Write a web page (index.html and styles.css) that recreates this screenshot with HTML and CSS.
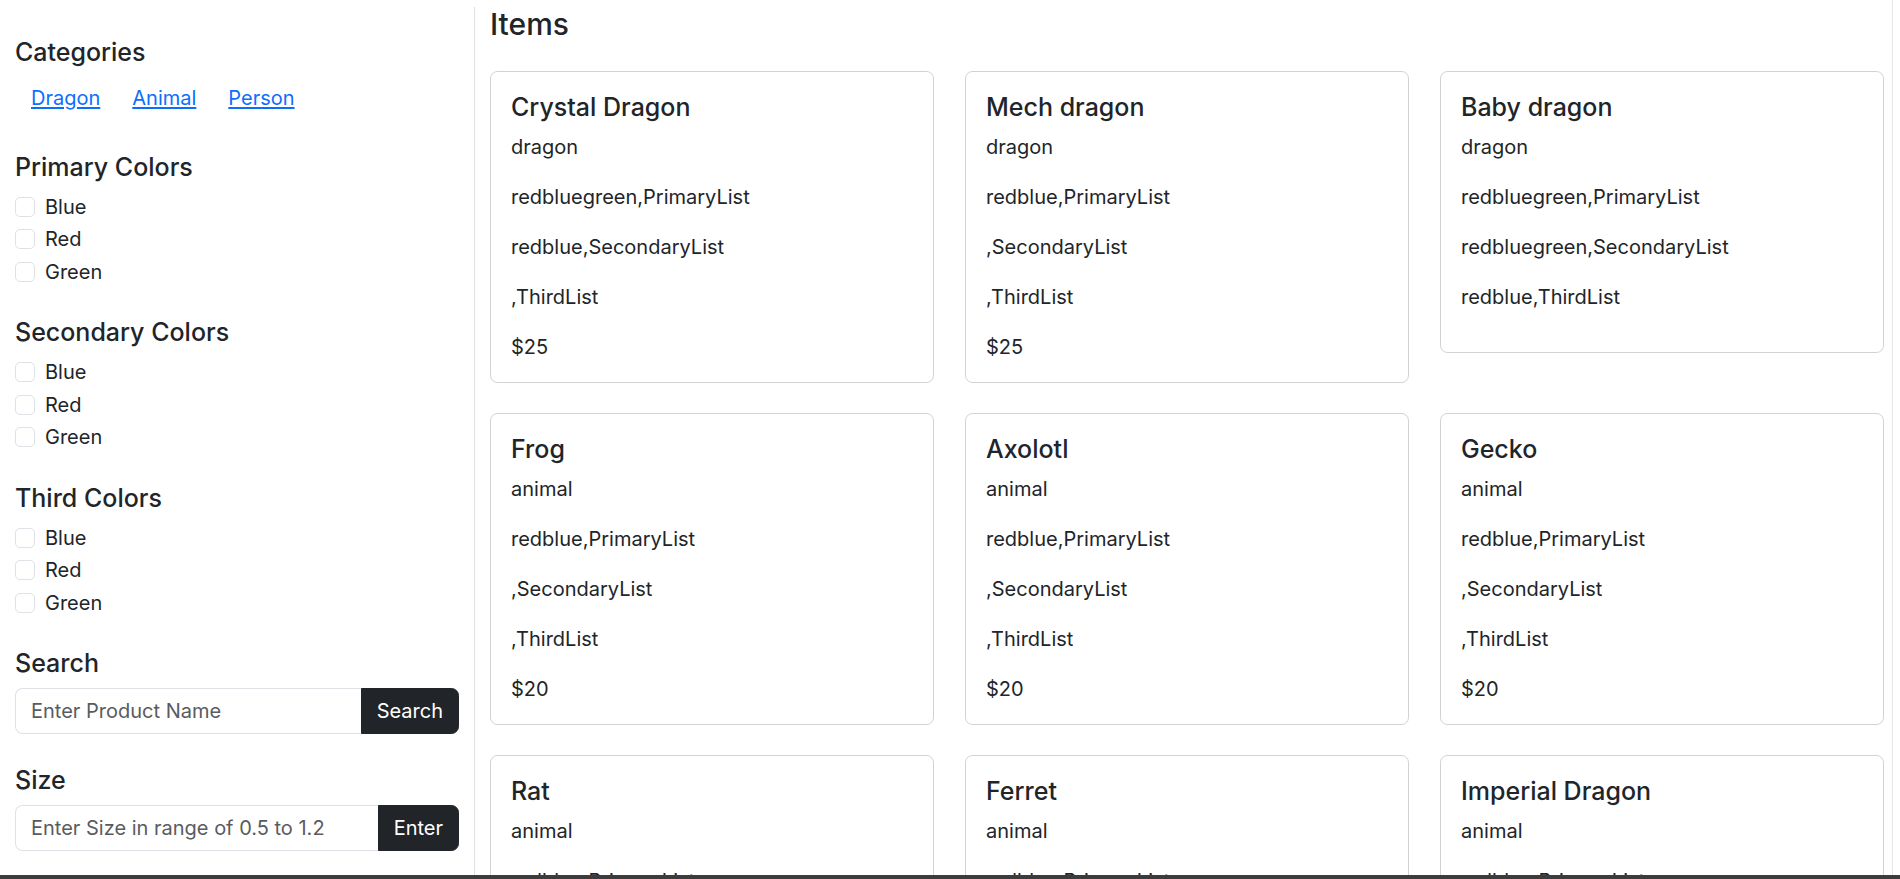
FILE: index.html
```html
<!DOCTYPE html>
<html lang="en">
<head>
<meta charset="utf-8">
<title>Items</title>
<link rel="stylesheet" href="styles.css">
</head>
<body>
<div class="layout">
  <aside class="sidebar">
    <section class="filter filter-cats">
      <h5 class="filter-title">Categories</h5>
      <nav class="cat-nav">
        <a class="cat-link" href="#">Dragon</a>
        <a class="cat-link" href="#">Animal</a>
        <a class="cat-link" href="#">Person</a>
      </nav>
    </section>
    <section class="filter">
      <h5 class="filter-title">Primary Colors</h5>
      <label class="check"><input class="check-box" type="checkbox"><span>Blue</span></label>
      <label class="check"><input class="check-box" type="checkbox"><span>Red</span></label>
      <label class="check"><input class="check-box" type="checkbox"><span>Green</span></label>
    </section>
    <section class="filter">
      <h5 class="filter-title">Secondary Colors</h5>
      <label class="check"><input class="check-box" type="checkbox"><span>Blue</span></label>
      <label class="check"><input class="check-box" type="checkbox"><span>Red</span></label>
      <label class="check"><input class="check-box" type="checkbox"><span>Green</span></label>
    </section>
    <section class="filter">
      <h5 class="filter-title">Third Colors</h5>
      <label class="check"><input class="check-box" type="checkbox"><span>Blue</span></label>
      <label class="check"><input class="check-box" type="checkbox"><span>Red</span></label>
      <label class="check"><input class="check-box" type="checkbox"><span>Green</span></label>
    </section>
    <section class="filter filter-search">
      <h5 class="filter-title">Search</h5>
      <div class="input-group">
        <input class="text-input" type="text" placeholder="Enter Product Name">
        <button class="btn-dark" type="button">Search</button>
      </div>
    </section>
    <section class="filter filter-size">
      <h5 class="filter-title">Size</h5>
      <div class="input-group">
        <input class="text-input" type="text" placeholder="Enter Size in range of 0.5 to 1.2">
        <button class="btn-dark" type="button">Enter</button>
      </div>
    </section>
  </aside>

  <main class="main">
    <h4 class="items-title">Items</h4>
    <div class="grid">
      <div class="card">
        <h5 class="card-title">Crystal Dragon</h5>
        <p class="card-text">dragon</p>
        <p class="card-text">redbluegreen,PrimaryList</p>
        <p class="card-text">redblue,SecondaryList</p>
        <p class="card-text">,ThirdList</p>
        <p class="card-text last">$25</p>
      </div>
      <div class="card">
        <h5 class="card-title">Mech dragon</h5>
        <p class="card-text">dragon</p>
        <p class="card-text">redblue,PrimaryList</p>
        <p class="card-text">,SecondaryList</p>
        <p class="card-text">,ThirdList</p>
        <p class="card-text last">$25</p>
      </div>
      <div class="card">
        <h5 class="card-title">Baby dragon</h5>
        <p class="card-text">dragon</p>
        <p class="card-text">redbluegreen,PrimaryList</p>
        <p class="card-text">redbluegreen,SecondaryList</p>
        <p class="card-text">redblue,ThirdList</p>
        <p class="card-text last"></p>
      </div>
      <div class="card">
        <h5 class="card-title">Frog</h5>
        <p class="card-text">animal</p>
        <p class="card-text">redblue,PrimaryList</p>
        <p class="card-text">,SecondaryList</p>
        <p class="card-text">,ThirdList</p>
        <p class="card-text last">$20</p>
      </div>
      <div class="card">
        <h5 class="card-title">Axolotl</h5>
        <p class="card-text">animal</p>
        <p class="card-text">redblue,PrimaryList</p>
        <p class="card-text">,SecondaryList</p>
        <p class="card-text">,ThirdList</p>
        <p class="card-text last">$20</p>
      </div>
      <div class="card">
        <h5 class="card-title">Gecko</h5>
        <p class="card-text">animal</p>
        <p class="card-text">redblue,PrimaryList</p>
        <p class="card-text">,SecondaryList</p>
        <p class="card-text">,ThirdList</p>
        <p class="card-text last">$20</p>
      </div>
      <div class="card">
        <h5 class="card-title">Rat</h5>
        <p class="card-text">animal</p>
        <p class="card-text">redblue,PrimaryList</p>
        <p class="card-text">,SecondaryList</p>
        <p class="card-text">,ThirdList</p>
        <p class="card-text last">$20</p>
      </div>
      <div class="card">
        <h5 class="card-title">Ferret</h5>
        <p class="card-text">animal</p>
        <p class="card-text">redblue,PrimaryList</p>
        <p class="card-text">,SecondaryList</p>
        <p class="card-text">,ThirdList</p>
        <p class="card-text last">$20</p>
      </div>
      <div class="card">
        <h5 class="card-title">Imperial Dragon</h5>
        <p class="card-text">animal</p>
        <p class="card-text">redblue,PrimaryList</p>
        <p class="card-text">,SecondaryList</p>
        <p class="card-text">,ThirdList</p>
        <p class="card-text last">$20</p>
      </div>
    </div>
  </main>
</div>
<div class="scroll-track"></div>
<div class="bottom-bar"></div>
</body>
</html>
```

FILE: styles.css
```css
* { box-sizing: border-box; }

html, body {
  margin: 0;
  padding: 0;
  overflow: hidden;
  background: #fff;
}

body {
  font-family: "Inter", "Liberation Sans", sans-serif;
  font-size: 20px;
  line-height: 30px;
  color: #212529;
}

.layout {
  display: flex;
  align-items: stretch;
}

/* Sidebar */
.sidebar {
  width: 475px;
  flex: 0 0 475px;
  margin-top: 7px;
  padding: 29.5px 15px 0 15px;
  border-right: 1px solid #dee2e6;
}

.filter {
  margin-bottom: 30.5px;
}

.filter-title {
  margin: 0 0 10px 0;
  font-size: 25px;
  line-height: 30px;
  font-weight: 500;
}

.filter-cats {
  margin-bottom: 28.8px;
}

.filter-cats .filter-title {
  margin-bottom: 6.3px;
}

.cat-nav {
  display: flex;
}

.cat-link {
  padding: 10px 16px;
  color: #0d6efd;
  text-decoration: underline;
  text-underline-offset: 2px;
}

.check {
  display: flex;
  align-items: flex-start;
  height: 30px;
  margin-bottom: 2.5px;
}

.check-box {
  appearance: none;
  -webkit-appearance: none;
  width: 20px;
  height: 20px;
  margin: 5px 10px 0 0;
  border: 1.25px solid #dee2e6;
  border-radius: 5px;
  background: #fff;
  flex: 0 0 auto;
}

.filter-search {
  margin-bottom: 30.5px;
}

.input-group {
  display: flex;
  align-items: stretch;
  height: 46px;
}

.text-input {
  flex: 1 1 auto;
  min-width: 0;
  font-family: inherit;
  font-size: 20px;
  line-height: 30px;
  padding: 7px 15px;
  color: #212529;
  border: 1.25px solid #dee2e6;
  border-right: 0;
  border-radius: 7.5px 0 0 7.5px;
  outline: none;
  background: #fff;
}

.text-input::placeholder {
  color: #595c5f;
}

.btn-dark {
  font-family: inherit;
  font-size: 20px;
  line-height: 30px;
  padding: 7px 15px;
  color: #fff;
  background: #212529;
  border: 1.25px solid #212529;
  border-radius: 0 7.5px 7.5px 0;
}

/* Main */
.main {
  flex: 1 1 auto;
  padding: 6px 16px 0 15px;
}

.items-title {
  margin: 0 0 29px 0;
  font-size: 30px;
  line-height: 36px;
  font-weight: 500;
}

.grid {
  display: grid;
  grid-template-columns: repeat(3, 1fr);
  column-gap: 31px;
  row-gap: 30px;
  align-items: start;
}

.card {
  border: 1.25px solid rgba(0, 0, 0, 0.175);
  border-radius: 7.5px;
  padding: 20px;
}

.card-title {
  margin: 0 0 10px 0;
  font-size: 25px;
  line-height: 30px;
  font-weight: 500;
}

.card-text {
  margin: 0 0 20px 0;
}

.card-text.last {
  margin-bottom: 0;
}

/* Window chrome overlays */
.scroll-track {
  position: fixed;
  top: 0;
  right: 0;
  bottom: 0;
  width: 8px;
  background: #fff;
  border-left: 1px solid #e6e6e6;
}

.bottom-bar {
  position: fixed;
  left: 0;
  right: 0;
  bottom: 0;
  height: 4px;
  background: #3c3c3c;
}
```
